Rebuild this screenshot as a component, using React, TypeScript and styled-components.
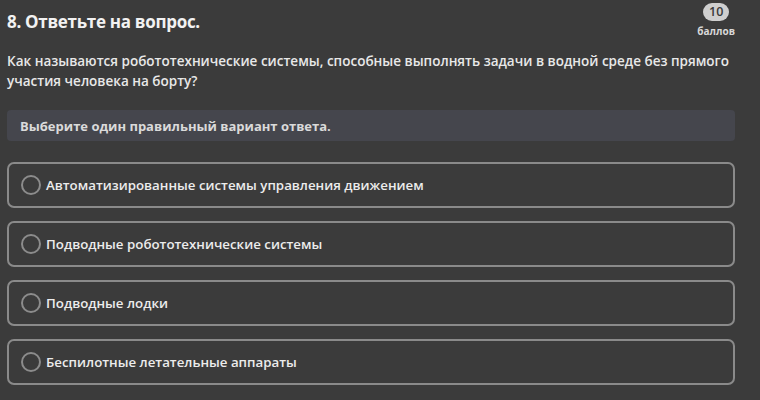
import React from "react";
import styled, { createGlobalStyle } from "styled-components";

const Global = createGlobalStyle`
  html, body { margin: 0; padding: 0; background: #3b3b3b; }
  body { font-family: "Open Sans", "Noto Sans", sans-serif; color: #e6e6e6; }
`;

const Page = styled.div`
  width: 760px;
  height: 400px;
  box-sizing: border-box;
  padding: 3px 25px 0 7px;
  background: #3b3b3b;
  overflow: hidden;
`;

const Header = styled.div`
  display: flex;
  justify-content: space-between;
  align-items: flex-start;
`;

const Title = styled.h1`
  margin: 8px 0 0 0;
  font-size: 17px;
  line-height: 22px;
  font-weight: 700;
  color: #f2f2f2;
  letter-spacing: -0.3px;
`;

const Score = styled.div`
  display: flex;
  flex-direction: column;
  align-items: center;
`;

const Badge = styled.div`
  width: 26px;
  height: 18px;
  border-radius: 9px;
  background: #cfcfcf;
  color: #3a3a3a;
  font-size: 12.5px;
  font-weight: 600;
  line-height: 18px;
  text-align: center;
`;

const ScoreLabel = styled.div`
  margin-top: 4px;
  font-size: 10px;
  line-height: 12px;
  font-weight: 700;
  color: #d8d8d8;
`;

const Question = styled.p`
  margin: 14px 0 0 0;
  font-size: 13.5px;
  line-height: 20px;
  font-weight: 600;
  color: #e8e8e8;
`;

const Hint = styled.div`
  margin-top: 19px;
  height: 31px;
  display: flex;
  align-items: center;
  padding-left: 13px;
  border-radius: 4px;
  background: #45464d;
  font-size: 13px;
  font-weight: 700;
  color: #dadada;
`;

const Options = styled.div`
  margin-top: 21px;
  display: flex;
  flex-direction: column;
  gap: 13px;
`;

const Option = styled.label`
  box-sizing: border-box;
  height: 46px;
  display: flex;
  align-items: center;
  gap: 5px;
  padding-left: 12px;
  border: 2px solid #8a8a8a;
  border-radius: 7px;
  font-size: 13.3px;
  font-weight: 600;
  color: #ececec;
`;

const Radio = styled.span`
  box-sizing: border-box;
  width: 20px;
  height: 20px;
  border-radius: 50%;
  border: 2px solid #8c8c8c;
  flex: none;
`;

const answers = [
  "Автоматизированные системы управления движением",
  "Подводные робототехнические системы",
  "Подводные лодки",
  "Беспилотные летательные аппараты",
];

export default function App() {
  return (
    <Page>
      <Global />
      <Header>
        <Title>8. Ответьте на вопрос.</Title>
        <Score>
          <Badge>10</Badge>
          <ScoreLabel>баллов</ScoreLabel>
        </Score>
      </Header>
      <Question>
        Как называются робототехнические системы, способные выполнять задачи в водной среде без прямого участия человека на борту?
      </Question>
      <Hint>Выберите один правильный вариант ответа.</Hint>
      <Options>
        {answers.map((a) => (
          <Option key={a}>
            <Radio />
            {a}
          </Option>
        ))}
      </Options>
    </Page>
  );
}
